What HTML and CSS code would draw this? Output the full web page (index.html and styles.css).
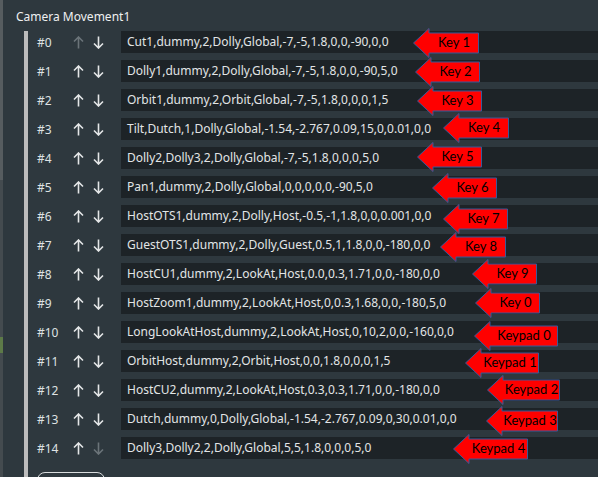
FILE: index.html
```html
<!DOCTYPE html>
<html>
<head>
<meta charset="utf-8">
<link rel="stylesheet" href="styles.css">
</head>
<body>
<div class="app">
  <div class="strip"><div class="strip-green"></div></div>
  <div class="panel">
    <div class="title">Camera Movement1</div>
    <div class="list">
      <div class="row"><span class="idx">#0</span><span class="mv off"><svg viewBox="0 0 11 13"><path d="M5.5 12.5V1M1 5.5L5.5 1L10 5.5"/></svg></span><span class="mv"><svg viewBox="0 0 11 13"><path d="M5.5 0.5V12M1 7.5L5.5 12L10 7.5"/></svg></span><div class="field">Cut1,dummy,2,Dolly,Global,-7,-5,1.8,0,0,-90,0,0</div></div>
      <div class="row"><span class="idx">#1</span><span class="mv"><svg viewBox="0 0 11 13"><path d="M5.5 12.5V1M1 5.5L5.5 1L10 5.5"/></svg></span><span class="mv"><svg viewBox="0 0 11 13"><path d="M5.5 0.5V12M1 7.5L5.5 12L10 7.5"/></svg></span><div class="field">Dolly1,dummy,2,Dolly,Global,-7,-5,1.8,0,0,-90,5,0</div></div>
      <div class="row"><span class="idx">#2</span><span class="mv"><svg viewBox="0 0 11 13"><path d="M5.5 12.5V1M1 5.5L5.5 1L10 5.5"/></svg></span><span class="mv"><svg viewBox="0 0 11 13"><path d="M5.5 0.5V12M1 7.5L5.5 12L10 7.5"/></svg></span><div class="field">Orbit1,dummy,2,Orbit,Global,-7,-5,1.8,0,0,0,1,5</div></div>
      <div class="row"><span class="idx">#3</span><span class="mv"><svg viewBox="0 0 11 13"><path d="M5.5 12.5V1M1 5.5L5.5 1L10 5.5"/></svg></span><span class="mv"><svg viewBox="0 0 11 13"><path d="M5.5 0.5V12M1 7.5L5.5 12L10 7.5"/></svg></span><div class="field">Tilt,Dutch,1,Dolly,Global,-1.54,-2.767,0.09,15,0,0.01,0,0</div></div>
      <div class="row"><span class="idx">#4</span><span class="mv"><svg viewBox="0 0 11 13"><path d="M5.5 12.5V1M1 5.5L5.5 1L10 5.5"/></svg></span><span class="mv"><svg viewBox="0 0 11 13"><path d="M5.5 0.5V12M1 7.5L5.5 12L10 7.5"/></svg></span><div class="field">Dolly2,Dolly3,2,Dolly,Global,-7,-5,1.8,0,0,0,5,0</div></div>
      <div class="row"><span class="idx">#5</span><span class="mv"><svg viewBox="0 0 11 13"><path d="M5.5 12.5V1M1 5.5L5.5 1L10 5.5"/></svg></span><span class="mv"><svg viewBox="0 0 11 13"><path d="M5.5 0.5V12M1 7.5L5.5 12L10 7.5"/></svg></span><div class="field">Pan1,dummy,2,Dolly,Global,0,0,0,0,0,-90,5,0</div></div>
      <div class="row"><span class="idx">#6</span><span class="mv"><svg viewBox="0 0 11 13"><path d="M5.5 12.5V1M1 5.5L5.5 1L10 5.5"/></svg></span><span class="mv"><svg viewBox="0 0 11 13"><path d="M5.5 0.5V12M1 7.5L5.5 12L10 7.5"/></svg></span><div class="field">HostOTS1,dummy,2,Dolly,Host,-0.5,-1,1.8,0,0,0.001,0,0</div></div>
      <div class="row"><span class="idx">#7</span><span class="mv"><svg viewBox="0 0 11 13"><path d="M5.5 12.5V1M1 5.5L5.5 1L10 5.5"/></svg></span><span class="mv"><svg viewBox="0 0 11 13"><path d="M5.5 0.5V12M1 7.5L5.5 12L10 7.5"/></svg></span><div class="field">GuestOTS1,dummy,2,Dolly,Guest,0.5,1,1.8,0,0,-180,0,0</div></div>
      <div class="row"><span class="idx">#8</span><span class="mv"><svg viewBox="0 0 11 13"><path d="M5.5 12.5V1M1 5.5L5.5 1L10 5.5"/></svg></span><span class="mv"><svg viewBox="0 0 11 13"><path d="M5.5 0.5V12M1 7.5L5.5 12L10 7.5"/></svg></span><div class="field">HostCU1,dummy,2,LookAt,Host,0.0,0.3,1.71,0,0,-180,0,0</div></div>
      <div class="row"><span class="idx">#9</span><span class="mv"><svg viewBox="0 0 11 13"><path d="M5.5 12.5V1M1 5.5L5.5 1L10 5.5"/></svg></span><span class="mv"><svg viewBox="0 0 11 13"><path d="M5.5 0.5V12M1 7.5L5.5 12L10 7.5"/></svg></span><div class="field">HostZoom1,dummy,2,LookAt,Host,0,0.3,1.68,0,0,-180,5,0</div></div>
      <div class="row"><span class="idx">#10</span><span class="mv"><svg viewBox="0 0 11 13"><path d="M5.5 12.5V1M1 5.5L5.5 1L10 5.5"/></svg></span><span class="mv"><svg viewBox="0 0 11 13"><path d="M5.5 0.5V12M1 7.5L5.5 12L10 7.5"/></svg></span><div class="field">LongLookAtHost,dummy,2,LookAt,Host,0,10,2,0,0,-160,0,0</div></div>
      <div class="row"><span class="idx">#11</span><span class="mv"><svg viewBox="0 0 11 13"><path d="M5.5 12.5V1M1 5.5L5.5 1L10 5.5"/></svg></span><span class="mv"><svg viewBox="0 0 11 13"><path d="M5.5 0.5V12M1 7.5L5.5 12L10 7.5"/></svg></span><div class="field">OrbitHost,dummy,2,Orbit,Host,0,0,1.8,0,0,0,1,5</div></div>
      <div class="row"><span class="idx">#12</span><span class="mv"><svg viewBox="0 0 11 13"><path d="M5.5 12.5V1M1 5.5L5.5 1L10 5.5"/></svg></span><span class="mv"><svg viewBox="0 0 11 13"><path d="M5.5 0.5V12M1 7.5L5.5 12L10 7.5"/></svg></span><div class="field">HostCU2,dummy,2,LookAt,Host,0.3,0.3,1.71,0,0,-180,0,0</div></div>
      <div class="row"><span class="idx">#13</span><span class="mv"><svg viewBox="0 0 11 13"><path d="M5.5 12.5V1M1 5.5L5.5 1L10 5.5"/></svg></span><span class="mv"><svg viewBox="0 0 11 13"><path d="M5.5 0.5V12M1 7.5L5.5 12L10 7.5"/></svg></span><div class="field">Dutch,dummy,0,Dolly,Global,-1.54,-2.767,0.09,0,30,0.01,0,0</div></div>
      <div class="row"><span class="idx">#14</span><span class="mv"><svg viewBox="0 0 11 13"><path d="M5.5 12.5V1M1 5.5L5.5 1L10 5.5"/></svg></span><span class="mv off"><svg viewBox="0 0 11 13"><path d="M5.5 0.5V12M1 7.5L5.5 12L10 7.5"/></svg></span><div class="field">Dolly3,Dolly2,2,Dolly,Global,5,5,1.8,0,0,0,5,0</div></div>
      <div class="add-row"><div class="add-btn"></div></div>
    </div>
  </div>
</div>

<div class="callout" style="left:413px;top:28px;width:66px"><svg viewBox="0 0 66 30" preserveAspectRatio="none"><polygon points="0.5,15 16,0.5 16,5 65.5,5 65.5,25 16,25 16,29.5"/></svg><span>Key 1</span></div>
<div class="callout" style="left:415px;top:57px;width:65px"><svg viewBox="0 0 65 30" preserveAspectRatio="none"><polygon points="0.5,15 16,0.5 16,5 64.5,5 64.5,25 16,25 16,29.5"/></svg><span>Key 2</span></div>
<div class="callout" style="left:417px;top:86px;width:65px"><svg viewBox="0 0 65 30" preserveAspectRatio="none"><polygon points="0.5,15 16,0.5 16,5 64.5,5 64.5,25 16,25 16,29.5"/></svg><span>Key 3</span></div>
<div class="callout" style="left:443px;top:113px;width:66px"><svg viewBox="0 0 66 30" preserveAspectRatio="none"><polygon points="0.5,15 16,0.5 16,5 65.5,5 65.5,25 16,25 16,29.5"/></svg><span>Key 4</span></div>
<div class="callout" style="left:417px;top:142px;width:65px"><svg viewBox="0 0 65 30" preserveAspectRatio="none"><polygon points="0.5,15 16,0.5 16,5 64.5,5 64.5,25 16,25 16,29.5"/></svg><span>Key 5</span></div>
<div class="callout" style="left:432px;top:173px;width:65px"><svg viewBox="0 0 65 30" preserveAspectRatio="none"><polygon points="0.5,15 16,0.5 16,5 64.5,5 64.5,25 16,25 16,29.5"/></svg><span>Key 6</span></div>
<div class="callout" style="left:443px;top:204px;width:65px"><svg viewBox="0 0 65 30" preserveAspectRatio="none"><polygon points="0.5,15 16,0.5 16,5 64.5,5 64.5,25 16,25 16,29.5"/></svg><span>Key 7</span></div>
<div class="callout" style="left:440px;top:232px;width:66px"><svg viewBox="0 0 66 30" preserveAspectRatio="none"><polygon points="0.5,15 16,0.5 16,5 65.5,5 65.5,25 16,25 16,29.5"/></svg><span>Key 8</span></div>
<div class="callout" style="left:472px;top:259px;width:65px"><svg viewBox="0 0 65 30" preserveAspectRatio="none"><polygon points="0.5,15 16,0.5 16,5 64.5,5 64.5,25 16,25 16,29.5"/></svg><span>Key 9</span></div>
<div class="callout" style="left:475px;top:288px;width:65px"><svg viewBox="0 0 65 30" preserveAspectRatio="none"><polygon points="0.5,15 16,0.5 16,5 64.5,5 64.5,25 16,25 16,29.5"/></svg><span>Key 0</span></div>
<div class="callout" style="left:474px;top:321px;width:84px"><svg viewBox="0 0 84 30" preserveAspectRatio="none"><polygon points="0.5,15 16,0.5 16,5 83.5,5 83.5,25 16,25 16,29.5"/></svg><span>Keypad 0</span></div>
<div class="callout" style="left:465px;top:348px;width:74px"><svg viewBox="0 0 74 30" preserveAspectRatio="none"><polygon points="0.5,15 16,0.5 16,5 73.5,5 73.5,25 16,25 16,29.5"/></svg><span>Keypad 1</span></div>
<div class="callout" style="left:487px;top:375px;width:73px"><svg viewBox="0 0 73 30" preserveAspectRatio="none"><polygon points="0.5,15 16,0.5 16,5 72.5,5 72.5,25 16,25 16,29.5"/></svg><span>Keypad 2</span></div>
<div class="callout" style="left:486px;top:406px;width:72px"><svg viewBox="0 0 72 30" preserveAspectRatio="none"><polygon points="0.5,15 16,0.5 16,5 71.5,5 71.5,25 16,25 16,29.5"/></svg><span>Keypad 3</span></div>
<div class="callout" style="left:453px;top:434px;width:75px"><svg viewBox="0 0 75 30" preserveAspectRatio="none"><polygon points="0.5,15 16,0.5 16,5 74.5,5 74.5,25 16,25 16,29.5"/></svg><span>Keypad 4</span></div>
</body>
</html>
```

FILE: styles.css
```css
html, body {
  margin: 0;
  padding: 0;
  background: #2e383e;
  overflow: hidden;
}
body {
  width: 598px;
  height: 477px;
  position: relative;
  font-family: "Noto Sans", "Open Sans", sans-serif;
  color: #e6e8e9;
}
.app {
  display: flex;
  height: 477px;
}
.strip {
  width: 3px;
  background: linear-gradient(#565c5f 0, #565c5f 180px, #444b4f 180px);
  flex: none;
  display: flex;
  flex-direction: column;
}
.strip-green {
  height: 16px;
  margin-top: 337px;
  background: #5d7a48;
}
.panel {
  flex: 1;
  min-width: 0;
  padding-left: 13px;
}
.title {
  height: 31px;
  font-size: 12px;
  line-height: 13px;
  padding-top: 10px;
  box-sizing: border-box;
  color: #eef0f1;
}
.list {
  margin-left: 8px;
  border-left: 4px solid #bcbcbc;
  display: flex;
  flex-direction: column;
  gap: 7px;
}
.row {
  display: flex;
  align-items: center;
  height: 22px;
  padding-left: 9px;
}
.idx {
  width: 36px;
  font-size: 12px;
  color: #dfe2e3;
  flex: none;
}
.mv {
  width: 11px;
  height: 13px;
  flex: none;
  margin-right: 9px;
  display: flex;
}
.mv svg {
  width: 11px;
  height: 13px;
  fill: none;
  stroke: #e4e6e7;
  stroke-width: 1.6;
}
.mv.off svg {
  stroke: #6b7479;
}
.field {
  margin-left: 8px;
  flex: 1;
  height: 22px;
  background: #1d2327;
  font-size: 12px;
  line-height: 22px;
  padding-left: 6px;
  white-space: nowrap;
  color: #e2e5e6;
}
.add-row {
  padding-left: 9px;
  padding-top: 6px;
}
.add-btn {
  width: 66px;
  height: 24px;
  border: 1.5px solid #d9dcdd;
  border-radius: 8px;
}
.callout {
  position: absolute;
  height: 30px;
}
.callout svg {
  position: absolute;
  left: 0;
  top: 0;
  width: 100%;
  height: 30px;
}
.callout polygon {
  fill: #ff0000;
  stroke: #3b5998;
  stroke-width: 1;
}
.callout span {
  position: absolute;
  left: 16px;
  right: 0;
  top: 5px;
  height: 20px;
  line-height: 18px;
  text-align: center;
  white-space: nowrap;
  font-family: "Lato", "Liberation Sans", sans-serif;
  font-size: 13px;
  color: #000;
}
```
